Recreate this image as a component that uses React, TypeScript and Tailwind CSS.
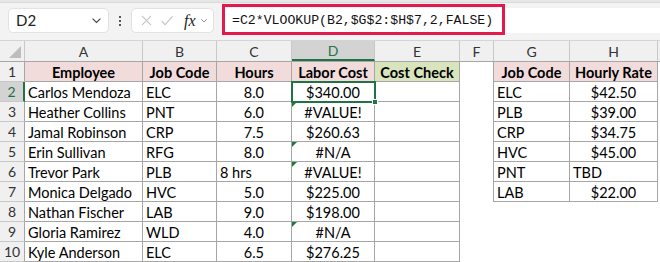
import React from "react";

type Align = "left" | "center" | "right";

interface CellDef {
  text?: string;
  align?: Align;
  bold?: boolean;
  bg?: string;
  err?: boolean;
  pr?: boolean;
}

const colWidths = [118, 74, 75, 83, 85, 34, 76, 88];
const colLetters = ["A", "B", "C", "D", "E", "F", "G", "H"];

const employees: [string, string, string, string, boolean][] = [
  ["Carlos Mendoza", "ELC", "8.0", "$340.00", false],
  ["Heather Collins", "PNT", "6.0", "#VALUE!", true],
  ["Jamal Robinson", "CRP", "7.5", "$260.63", false],
  ["Erin Sullivan", "RFG", "8.0", "#N/A", true],
  ["Trevor Park", "PLB", "8 hrs", "#VALUE!", true],
  ["Monica Delgado", "HVC", "5.0", "$225.00", false],
  ["Nathan Fischer", "LAB", "9.0", "$198.00", false],
  ["Gloria Ramirez", "WLD", "4.0", "#N/A", true],
  ["Kyle Anderson", "ELC", "6.5", "$276.25", false],
];

const rates: [string, string][] = [
  ["ELC", "$42.50"],
  ["PLB", "$39.00"],
  ["CRP", "$34.75"],
  ["HVC", "$45.00"],
  ["PNT", "TBD"],
  ["LAB", "$22.00"],
];

function buildRow(r: number): CellDef[] {
  if (r === 1) {
    return [
      { text: "Employee", align: "center", bold: true, bg: "bg-[#f2dcdb]" },
      { text: "Job Code", align: "center", bold: true, bg: "bg-[#f2dcdb]" },
      { text: "Hours", align: "center", bold: true, bg: "bg-[#f2dcdb]" },
      { text: "Labor Cost", align: "center", bold: true, bg: "bg-[#f2dcdb]" },
      { text: "Cost Check", align: "center", bold: true, bg: "bg-[#d8e4bc]" },
      {},
      { text: "Job Code", align: "center", bold: true, bg: "bg-[#f2dcdb]" },
      { text: "Hourly Rate", align: "center", bold: true, bg: "bg-[#f2dcdb]" },
    ];
  }
  const e = employees[r - 2];
  const rate = rates[r - 2];
  const hoursIsText = e[2] === "8 hrs";
  return [
    { text: e[0], align: "left" },
    { text: e[1], align: "left" },
    hoursIsText ? { text: e[2], align: "left" } : { text: e[2], align: "right", pr: true },
    { text: e[3], align: "center", err: e[4] },
    {},
    {},
    rate ? { text: rate[0], align: "left" } : {},
    rate ? { text: rate[1], align: rate[1] === "TBD" ? "left" : "center" } : {},
  ];
}

const Cell = ({ def, col, row }: { def: CellDef; col: number; row: number }) => {
  const inMain = col <= 4;
  const inLookup = col >= 6 && row <= 7;
  let border = "";
  if (inMain || inLookup) border = "border-r border-b border-[#a6a6a6]";
  else if (col === 5 && row <= 7) border = "border-r border-[#a6a6a6]";
  const justify =
    def.align === "center" ? "justify-center" : def.align === "right" ? "justify-end" : "justify-start";
  return (
    <div
      className={`relative flex h-[20px] shrink-0 items-end pb-[1px] px-[3px] text-[14.5px] leading-none text-black ${border} ${justify} ${def.bg ?? "bg-white"} ${def.bold ? "font-bold" : ""} ${def.pr ? "pr-[27px]" : ""}`}
      style={{ width: colWidths[col] }}
    >
      {def.err && (
        <div className="absolute left-0 top-0 h-0 w-0 border-t-[5px] border-r-[5px] border-t-[#1e7b34] border-r-transparent" />
      )}
      <span className="whitespace-nowrap">{def.text}</span>
    </div>
  );
};

const Chevron = ({ className }: { className?: string }) => (
  <svg viewBox="0 0 12 8" className={className} fill="none" stroke="currentColor" strokeWidth="1.3">
    <path d="M1.5 1.8 6 6.2l4.5-4.4" />
  </svg>
);

export default function App() {
  const rows = Array.from({ length: 10 }, (_, i) => i + 1);
  return (
    <div className="w-[660px] h-[262px] overflow-hidden bg-white font-['Lato',sans-serif]">
      {/* formula bar */}
      <div className="relative h-[41px] bg-[#f3f3f3] border-b border-[#d4d4d4]">
        <div className="h-[3px] bg-[#e6e6e6] border-b border-[#dadada]" />
        <div className="flex items-start pl-[8px] pt-[5px]">
          <div className="flex h-[25px] w-[101px] items-center justify-between rounded-[5px] border border-[#e2e2e2] bg-white pl-[7px] pr-[6px]">
            <span className="text-[15px] text-[#222]">D2</span>
            <Chevron className="h-[7px] w-[11px] text-[#444]" />
          </div>
          <div className="flex h-[25px] w-[22px] flex-col items-center justify-center gap-[2px]">
            <span className="h-[2px] w-[2px] bg-[#555]" />
            <span className="h-[2px] w-[2px] bg-[#555]" />
            <span className="h-[2px] w-[2px] bg-[#555]" />
          </div>
          <div className="flex h-[25px] w-[83px] items-center rounded-[5px] border border-[#e2e2e2] bg-white pl-[9px]">
            <svg viewBox="0 0 12 12" className="h-[11px] w-[11px] text-[#c4c4c4]" fill="none" stroke="currentColor" strokeWidth="1.2">
              <path d="M1 1l10 10M11 1 1 11" />
            </svg>
            <svg viewBox="0 0 14 12" className="ml-[8px] h-[11px] w-[14px] text-[#c4c4c4]" fill="none" stroke="currentColor" strokeWidth="1.2">
              <path d="M1 6.5 5 10.5 13 1.5" />
            </svg>
            <span className="ml-[10px] font-['Liberation_Serif',serif] text-[16px] italic text-[#222] leading-none">fx</span>
            <Chevron className="ml-[4px] h-[5px] w-[8px] text-[#777]" />
          </div>
          <div className="ml-[8px] flex h-[25px] flex-1 items-center bg-white pl-[10px]">
            <span className="font-['Liberation_Mono',monospace] text-[13.2px] text-[#111]">
              =C2*VLOOKUP(B2,$G$2:$H$7,2,FALSE)
            </span>
          </div>
        </div>
        <div className="absolute left-[222px] top-[4px] h-[31px] w-[283px] border-[3px] border-[#e3194d]" />
      </div>

      {/* column headers */}
      <div className="flex h-[20px] bg-[#f0f0f0]">
        <div className="relative w-[25px] shrink-0 border-r border-[#c8c8c8]">
          <div className="absolute right-[3px] bottom-[3px] h-0 w-0 border-b-[12px] border-l-[12px] border-b-[#bdbdbd] border-l-transparent" />
        </div>
        {colLetters.map((l, i) => (
          <div
            key={l}
            className={`flex shrink-0 items-center justify-center text-[14px] ${
              l === "D"
                ? "bg-[#d3d3d3] border-b-2 border-[#217346] text-[#217346] border-r border-r-[#c8c8c8]"
                : "border-r border-[#c8c8c8] text-[#333]"
            }`}
            style={{ width: colWidths[i] }}
          >
            {l}
          </div>
        ))}
        <div className="flex-1" />
      </div>

      {/* grid */}
      <div className="relative border-t border-[#a6a6a6]">
        {rows.map((r) => {
          const defs = buildRow(r);
          return (
            <div key={r} className="flex">
              <div
                className={`flex h-[20px] w-[25px] shrink-0 items-center justify-center border-b border-[#c8c8c8] text-[14px] ${
                  r === 2
                    ? "bg-[#d3d3d3] text-[#217346] border-r-2 border-r-[#217346]"
                    : "bg-[#f0f0f0] text-[#333] border-r border-r-[#a6a6a6]"
                }`}
              >
                {r}
              </div>
              {defs.map((d, c) => (
                <Cell key={c} def={d} col={c} row={r} />
              ))}
            </div>
          );
        })}
        <div className="flex">
          <div className="h-[20px] w-[25px] bg-[#f0f0f0] border-r border-[#a6a6a6]" />
        </div>
        {/* active cell D2 */}
        <div className="absolute left-[291px] top-[19px] h-[22px] w-[85px] border-2 border-[#217346]">
          <div className="absolute -right-[4px] -bottom-[4px] h-[6px] w-[6px] bg-[#217346] border border-white" />
        </div>
      </div>
    </div>
  );
}
